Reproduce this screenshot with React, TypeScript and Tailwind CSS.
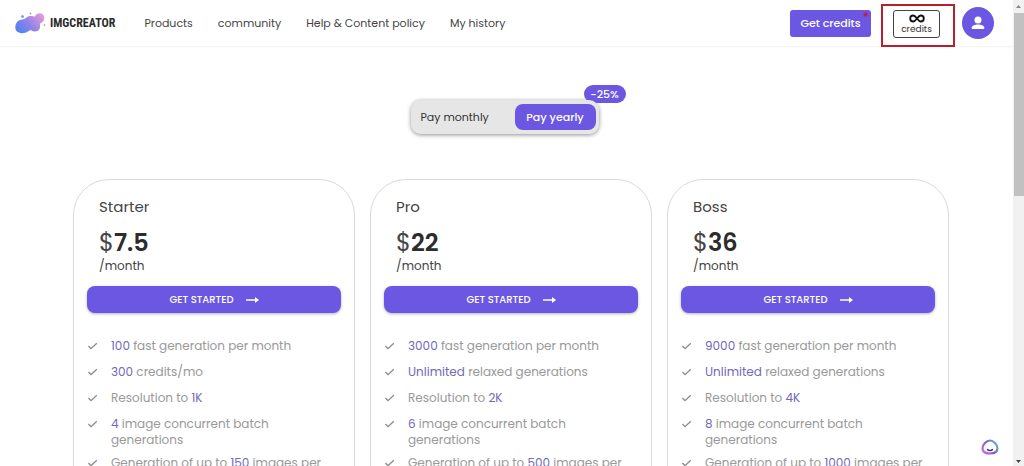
import { ReactNode } from "react";

interface Feature {
  before?: string;
  highlight: string;
  after?: string;
}

interface Plan {
  name: string;
  price: string;
  features: Feature[];
}

const navLinks = ["Products", "community", "Help & Content policy", "My history"];

const plans: Plan[] = [
  {
    name: "Starter",
    price: "7.5",
    features: [
      { highlight: "100", after: " fast generation per month" },
      { highlight: "300", after: " credits/mo" },
      { before: "Resolution to ", highlight: "1K" },
      { highlight: "4", after: " image concurrent batch generations" },
      { before: "Generation of up to ", highlight: "150", after: " images per" },
    ],
  },
  {
    name: "Pro",
    price: "22",
    features: [
      { highlight: "3000", after: " fast generation per month" },
      { highlight: "Unlimited", after: " relaxed generations" },
      { before: "Resolution to ", highlight: "2K" },
      { highlight: "6", after: " image concurrent batch generations" },
      { before: "Generation of up to ", highlight: "500", after: " images per" },
    ],
  },
  {
    name: "Boss",
    price: "36",
    features: [
      { highlight: "9000", after: " fast generation per month" },
      { highlight: "Unlimited", after: " relaxed generations" },
      { before: "Resolution to ", highlight: "4K" },
      { highlight: "8", after: " image concurrent batch generations" },
      { before: "Generation of up to ", highlight: "1000", after: " images per" },
    ],
  },
];

function Logo() {
  return (
    <a href="#" className="flex items-center gap-1">
      <svg viewBox="0 0 32 22" className="h-[22px] w-8">
        <defs>
          <linearGradient id="blob" x1="0" y1="0.8" x2="1" y2="0.2">
            <stop offset="0" stopColor="#4f83f5" />
            <stop offset="0.45" stopColor="#8d83e8" />
            <stop offset="1" stopColor="#e59ad6" />
          </linearGradient>
        </defs>
        <g fill="url(#blob)">
          <path d="M5 8.500c2-1.500 5-.5 7-2.500 2-2.500 6-2 9-1.500 1-2.500 3-3.500 5.500-3.200 4 .7 5 5.700 2.500 8.200-1 1-2.500 1.200-3 2.500-.4 1.500.8 3-.5 5-1.800 3-6 3-8 1.500-1.500-.8-2.500.2-4 1.300-3 2-7.500 2-10.500-.3C.5 17.500.5 11 5 8.500z" />
        </g>
        <circle cx="8.500" cy="4.500" r="1.300" fill="#5f8af0" />
        <circle cx="16.500" cy="1.500" r="0.900" fill="#a79be0" />
        <circle cx="30.500" cy="13" r="0.900" fill="#d58fd8" />
      </svg>
      <span className="font-['Liberation_Sans_Narrow','Roboto_Condensed',sans-serif] text-xs font-bold text-[#2c2c2c]">
        IMGCREATOR
      </span>
    </a>
  );
}

function Header() {
  return (
    <header className="flex h-[46px] items-center pr-[19px] pl-[14px] shadow-[0_1px_2px_rgba(0,0,0,0.06)]">
      <Logo />
      <nav className="ml-[29px] flex gap-[25px] text-[11px] text-[#444]">
        {navLinks.map((link) => (
          <a key={link} href="#">
            {link}
          </a>
        ))}
      </nav>

      <div className="ml-auto flex items-center">
        <button className="relative h-[27px] w-[81px] rounded-[3px] bg-[#6b57e2] text-[11px] font-medium text-white">
          Get credits
          <svg viewBox="0 0 6 6" className="absolute top-[2px] right-[3px] size-[5px]">
            <path d="M1 1l4 4M5 1L1 5" stroke="#c4213f" strokeWidth="2" />
          </svg>
        </button>
        <div className="mt-1 ml-[10px] flex h-[43px] w-[74px] items-center justify-center border-2 border-[#b5202a] pr-[3px] pb-[2px]">
          <button className="flex h-7 w-[47px] flex-col items-center justify-center rounded-[3px] border border-[#444] text-[#333]">
            <svg viewBox="0 0 16 9" className="h-[9px] w-4" fill="none" stroke="#111" strokeWidth="1.800">
              <path d="M8 4.500C6.500 2.500 5.500 1.500 4.200 1.500a3 3 0 0 0 0 6C5.500 7.500 6.500 6.500 8 4.500s2.500-3 3.800-3a3 3 0 0 1 0 6C10.500 7.500 9.500 6.500 8 4.500z" />
            </svg>
            <span className="text-[9px] leading-[12px]">credits</span>
          </button>
        </div>
        <button
          aria-label="Account"
          className="ml-[7px] flex size-8 items-center justify-center rounded-full bg-[#6b57e2]"
        >
          <svg viewBox="0 0 16 16" className="size-4" fill="#fff">
            <circle cx="8" cy="5" r="3.500" />
            <path d="M1.800 14v-1.500C1.800 10.300 5 9.400 8 9.400s6.200.9 6.200 3.100V14z" />
          </svg>
        </button>
      </div>
    </header>
  );
}

function BillingToggle() {
  return (
    <div className="relative isolate mx-auto flex h-[34px] w-[188px] items-center justify-between rounded-[10px] bg-[#e6e6e6] pr-[3px] pl-[10px] text-[11px] shadow-[0_1px_4px_rgba(0,0,0,0.45)]">
      <button className="text-[#333]">Pay monthly</button>
      <button className="h-[26px] w-[81px] rounded-lg bg-[#6b57e2] font-medium text-white">
        Pay yearly
      </button>
      <span className="absolute -top-[15px] -right-[27px] -z-10 flex h-[18px] w-[42px] items-center justify-center rounded-full bg-[#6b57e2] text-[11px] font-medium text-white">
        -25%
      </span>
      <span className="absolute inset-0 -z-10 rounded-[10px] bg-[#e6e6e6]" />
    </div>
  );
}

function FeatureRow({ children }: { children: ReactNode }) {
  return (
    <li className="flex min-h-[19px] gap-[13px]">
      <svg
        viewBox="0 0 11 8"
        className="mt-1 h-2 w-[11px] shrink-0"
        fill="none"
        stroke="#8a8a8a"
        strokeWidth="1.300"
      >
        <path d="M1.500 4l2.500 2.700L9.800 1.200" />
      </svg>
      <span>{children}</span>
    </li>
  );
}

function PlanCard({ plan }: { plan: Plan }) {
  return (
    <section className="h-[400px] rounded-[36px] border border-[#d9d9d9] px-[13px] pt-4">
      <div className="px-3 text-[#444]">
        <h2 className="text-[15px] leading-[22px]">{plan.name}</h2>
        <p className="mt-[10px] text-2xl leading-[30px]">
          $<span className="font-semibold text-[#2c2c2c]">{plan.price}</span>
        </p>
        <p className="text-xs leading-4">/month</p>
      </div>
      <button className="mt-3 flex h-[27px] w-full items-center justify-center gap-3 rounded-lg bg-[#6b57e2] text-[10px] font-medium text-white shadow-[0_1px_3px_rgba(0,0,0,0.3)]">
        GET STARTED
        <svg viewBox="0 0 13 8" className="h-2 w-[13px]">
          <path d="M0 4h10" stroke="#fff" strokeWidth="1.500" />
          <path d="M9 1l4 3-4 3z" fill="#fff" />
        </svg>
      </button>
      <ul className="mt-[25px] flex flex-col gap-[7px] pr-1 text-xs leading-4 text-[#999]">
        {plan.features.map((feature) => (
          <FeatureRow key={feature.highlight + feature.before + feature.after}>
            {feature.before}
            <span className="text-[#7369b8]">{feature.highlight}</span>
            {feature.after}
          </FeatureRow>
        ))}
      </ul>
    </section>
  );
}

function ChatBubble() {
  return (
    <button aria-label="Open chat" className="fixed right-[24px] bottom-[10px]">
      <svg viewBox="0 0 20 18" className="h-[18px] w-5" fill="none">
        <defs>
          <linearGradient id="chat" x1="0" y1="0.8" x2="1" y2="0.2">
            <stop offset="0" stopColor="#c56be8" />
            <stop offset="0.5" stopColor="#7a5fc0" />
            <stop offset="1" stopColor="#62b5dc" />
          </linearGradient>
        </defs>
        <path
          d="M10 2.500c3.500 0 7.500 4 7.500 7.800 0 4.200-3.500 5.200-7.500 5.200s-7.500-1-7.500-5.200c0-3.800 4-7.800 7.500-7.800z"
          stroke="url(#chat)"
          strokeWidth="2.200"
        />
        <path d="M7.500 11.500c1 1.500 4 1.500 5 0" stroke="#3f2a78" strokeWidth="1.400" strokeLinecap="round" />
      </svg>
    </button>
  );
}

function ScrollTrack() {
  return (
    <div className="flex w-[11px] shrink-0 flex-col items-center bg-[#f1f1f1]">
      <svg viewBox="0 0 11 13" className="h-[13px] w-[11px] shrink-0">
        <path d="M3 8l2.500-3L8 8z" fill="#888" />
      </svg>
      <div className="h-[183px] w-[10px] bg-[#c1c1c1]" />
      <svg viewBox="0 0 11 8" className="mt-auto h-2 w-[11px] shrink-0">
        <path d="M3 2l2.500 3L8 2z" fill="#444" />
      </svg>
    </div>
  );
}

export default function App() {
  return (
    <div className="flex h-screen overflow-hidden bg-white font-[Poppins,Inter,sans-serif]">
      <div className="min-w-0 flex-1">
        <Header />
        <main className="pt-[54px] pr-1">
          <BillingToggle />
          <div className="mt-[45px] grid grid-cols-3 gap-[15px] pr-[60px] pl-[73px]">
            {plans.map((plan) => (
              <PlanCard key={plan.name} plan={plan} />
            ))}
          </div>
        </main>
      </div>
      <ScrollTrack />
      <ChatBubble />
    </div>
  );
}
